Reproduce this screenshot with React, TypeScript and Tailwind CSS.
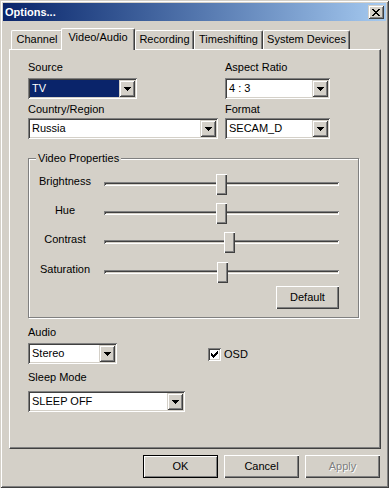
import React from 'react';

const raised = 'shadow-[inset_1px_1px_#fff,inset_-1px_-1px_#404040,inset_-2px_-2px_#808080]';
const comboBtn = 'shadow-[inset_1px_1px_#d4d0c8,inset_-1px_-1px_#404040,inset_2px_2px_#fff,inset_-2px_-2px_#808080]';
const sunken = 'shadow-[inset_1px_1px_#808080,inset_-1px_-1px_#fff,inset_2px_2px_#404040,inset_-2px_-2px_#d4d0c8]';

const Arrow = () => (
  <svg width="7" height="4" shapeRendering="crispEdges" fill="#000">
    <rect x="0" y="0" width="7" height="1" />
    <rect x="1" y="1" width="5" height="1" />
    <rect x="2" y="2" width="3" height="1" />
    <rect x="3" y="3" width="1" height="1" />
  </svg>
);

const CloseGlyph = () => (
  <svg width="8" height="7" shapeRendering="crispEdges" fill="#000">
    <rect x="0" y="0" width="2" height="1" />
    <rect x="6" y="0" width="2" height="1" />
    <rect x="1" y="1" width="2" height="1" />
    <rect x="5" y="1" width="2" height="1" />
    <rect x="2" y="2" width="4" height="1" />
    <rect x="3" y="3" width="2" height="1" />
    <rect x="2" y="4" width="4" height="1" />
    <rect x="1" y="5" width="2" height="1" />
    <rect x="5" y="5" width="2" height="1" />
    <rect x="0" y="6" width="2" height="1" />
    <rect x="6" y="6" width="2" height="1" />
  </svg>
);

const CheckGlyph = () => (
  <svg width="7" height="7" shapeRendering="crispEdges" fill="#000">
    <rect x="6" y="0" width="1" height="1" />
    <rect x="5" y="1" width="2" height="1" />
    <rect x="0" y="2" width="1" height="1" />
    <rect x="4" y="2" width="3" height="1" />
    <rect x="0" y="3" width="2" height="1" />
    <rect x="3" y="3" width="3" height="1" />
    <rect x="0" y="4" width="5" height="1" />
    <rect x="1" y="5" width="3" height="1" />
    <rect x="2" y="6" width="1" height="1" />
  </svg>
);

interface ComboProps {
  value: string;
  width: string;
  selected?: boolean;
}

const Combo: React.FC<ComboProps> = ({ value, width, selected }) => (
  <div className={`flex h-[21px] ${width} bg-white p-[2px] ${sunken}`}>
    <div className={`flex flex-1 items-center pl-[2px] ${selected ? 'bg-[#0a246a] text-white' : ''}`}>{value}</div>
    <div className={`flex w-[16px] items-center justify-center bg-[#d4d0c8] ${comboBtn}`}>
      <Arrow />
    </div>
  </div>
);

const tabs = [
  { label: 'Channel', w: 'w-[52px]' },
  { label: 'Video/Audio', w: 'w-[74px]', active: true },
  { label: 'Recording', w: 'w-[59px]' },
  { label: 'Timeshifting', w: 'w-[69px]' },
  { label: 'System Devices', w: 'w-[87px]' },
];

const sliders = [
  { label: 'Brightness', left: 'left-[112px]', gap: '' },
  { label: 'Hue', left: 'left-[112px]', gap: 'mt-[8px]' },
  { label: 'Contrast', left: 'left-[120px]', gap: 'mt-[8px]' },
  { label: 'Saturation', left: 'left-[113px]', gap: 'mt-[9px]' },
];

const Button: React.FC<{ label: string; isDefault?: boolean; disabled?: boolean; width?: string }> = ({
  label,
  isDefault,
  disabled,
  width = 'w-[75px]',
}) => (
  <div
    className={`flex h-[23px] ${width} items-center justify-center bg-[#d4d0c8] ${
      isDefault ? 'border border-black shadow-[inset_1px_1px_#fff,inset_-1px_-1px_#808080]' : raised
    } ${disabled ? 'text-[#808080] [text-shadow:1px_1px_0_#fff]' : ''}`}
  >
    {label}
  </div>
);

export default function App() {
  return (
    <div className="flex h-[488px] w-[389px] flex-col bg-[#d4d0c8] p-[3px] font-[family-name:'Liberation_Sans',Arial,sans-serif] text-[11px] leading-[13px] text-black shadow-[inset_1px_1px_#d4d0c8,inset_-1px_-1px_#404040,inset_2px_2px_#fff,inset_-2px_-2px_#808080]">
      {/* title bar */}
      <div className="flex h-[18px] items-center justify-between bg-linear-to-r from-[#0a246a] to-[#a6caf0] px-[2px]">
        <span className="font-bold text-white">Options...</span>
        <div className={`flex h-[14px] w-[16px] items-center justify-center bg-[#d4d0c8] ${comboBtn}`}>
          <CloseGlyph />
        </div>
      </div>

      <div className="pl-[6px] pt-[7px]">
        {/* tabs */}
        <div className="flex items-end pl-[2px]">
          {tabs.map((t) =>
            t.active ? (
              <div
                key={t.label}
                className={`relative z-10 -mb-px -ml-[2px] h-[22px] ${t.w} rounded-t-[2px] border-l border-t border-r border-l-white border-t-white border-r-[#404040] bg-[#d4d0c8] pt-[2px] text-center shadow-[inset_-1px_0_#808080]`}
              >
                {t.label}
              </div>
            ) : (
              <div
                key={t.label}
                className={`h-[19px] ${t.w} rounded-t-[2px] border-l border-t border-r border-l-white border-t-white border-r-[#404040] pt-[2px] text-center shadow-[inset_-1px_0_#808080]`}
              >
                {t.label}
              </div>
            )
          )}
        </div>

        {/* tab page */}
        <div className="flex h-[400px] w-[372px] flex-col border border-l-white border-t-white border-r-[#404040] border-b-[#404040] pl-[18px] pt-[11px] shadow-[inset_-1px_-1px_#808080]">
          <div className="flex">
            <div className="w-[197px]">
              <div>Source</div>
              <div className="mt-[4px]">
                <Combo value="TV" width="w-[109px]" selected />
              </div>
              <div className="mt-[4px]">Country/Region</div>
              <div className="mt-[2px]">
                <Combo value="Russia" width="w-[190px]" />
              </div>
            </div>
            <div>
              <div>Aspect Ratio</div>
              <div className="mt-[4px]">
                <Combo value="4 : 3" width="w-[105px]" />
              </div>
              <div className="mt-[4px]">Format</div>
              <div className="mt-[2px]">
                <Combo value="SECAM_D" width="w-[105px]" />
              </div>
            </div>
          </div>

          {/* video properties group */}
          <div className="relative mt-[19px] w-[331px] border border-[#808080] pb-[8px] pt-[15px] shadow-[1px_1px_#fff,inset_1px_1px_#fff]">
            <span className="absolute -top-[7px] left-[7px] bg-[#d4d0c8] px-[2px]">Video Properties</span>
            {sliders.map((s) => (
              <div key={s.label} className={`flex h-[21px] items-start pl-[7px] ${s.gap}`}>
                <div className="w-[58px] pt-px text-center">{s.label}</div>
                <div className="relative ml-[10px] h-[21px] w-[235px]">
                  <div className={`mt-[8px] h-[4px] bg-[#d4d0c8] ${sunken}`} />
                  <div className={`absolute top-0 ${s.left} h-[21px] w-[11px] bg-[#d4d0c8] ${raised}`} />
                </div>
              </div>
            ))}
            <div className="mt-[3px] flex justify-end pr-[19px]">
              <Button label="Default" width="w-[63px]" />
            </div>
          </div>

          <div className="mt-[8px]">Audio</div>
          <div className="mt-[4px] flex items-start">
            <Combo value="Stereo" width="w-[89px]" />
            <div className="ml-[91px] mt-[5px] flex items-start">
              <div className={`flex h-[13px] w-[13px] items-center justify-center bg-white ${sunken}`}>
                <CheckGlyph />
              </div>
              <span className="ml-[3px]">OSD</span>
            </div>
          </div>
          <div className="mt-[7px]">Sleep Mode</div>
          <div className="mt-[7px]">
            <Combo value="SLEEP OFF" width="w-[157px]" />
          </div>
        </div>

        {/* dialog buttons */}
        <div className="mt-[6px] flex w-[372px] justify-end gap-[6px] pr-px">
          <Button label="OK" isDefault />
          <Button label="Cancel" />
          <Button label="Apply" disabled />
        </div>
      </div>
    </div>
  );
}
